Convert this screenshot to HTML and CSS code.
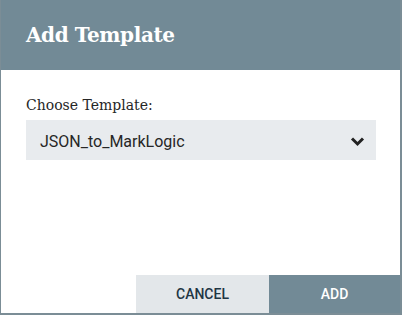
FILE: index.html
```html
<!DOCTYPE html>
<html lang="en">
<head>
    <meta charset="UTF-8">
    <title>Add Template</title>
    <link rel="stylesheet" href="styles.css">
</head>
<body>
    <div class="dialog">
        <header class="dialog-header">
            <h1>Add Template</h1>
        </header>
        <div class="dialog-body">
            <label class="field-label" for="template">Choose Template:</label>
            <div class="select">
                <span class="select-value">JSON_to_MarkLogic</span>
                <svg class="chevron" width="15" height="11" viewBox="0 0 15 11">
                    <path d="M2 2.5 L7.5 8 L13 2.5" fill="none" stroke="#222" stroke-width="3"/>
                </svg>
            </div>
        </div>
        <div class="dialog-footer">
            <button class="btn btn-cancel">CANCEL</button>
            <button class="btn btn-add">ADD</button>
        </div>
    </div>
</body>
</html>
```

FILE: styles.css
```css
body {
    margin: 0;
    padding: 0;
    background: #ffffff;
}
.dialog {
    width: 402px;
    height: 315px;
    box-sizing: border-box;
    border: 1px solid #7b8d96;
    border-top: none;
    border-bottom-width: 2px;
    border-right-width: 2px;
    display: flex;
    flex-direction: column;
    background: #fff;
}
.dialog-header {
    background-color: #728a96;
    height: 70px;
    display: flex;
    align-items: center;
    padding: 0 25px;
}
.dialog-header h1 {
    margin: 0;
    color: #fff;
    font-family: "DejaVu Serif", serif;
    font-size: 20px;
    font-weight: bold;
    letter-spacing: -0.4px;
}
.dialog-body {
    flex-grow: 1;
    padding: 27px 24px 0 25px;
}
.field-label {
    display: block;
    font-family: "DejaVu Serif", serif;
    font-size: 14px;
    color: #262626;
    margin-bottom: 7px;
}
.select {
    height: 40px;
    background-color: #e8ebee;
    display: flex;
    align-items: center;
    justify-content: space-between;
    padding: 2px 11px 0 14px;
    box-sizing: border-box;
}
.select-value {
    font-family: Roboto, sans-serif;
    font-size: 16px;
    color: #262626;
}
.dialog-footer {
    display: flex;
    justify-content: flex-end;
    height: 38px;
}
.btn {
    border: none;
    font-family: Roboto, sans-serif;
    font-size: 14px;
    font-weight: 500;
    cursor: pointer;
}
.btn-cancel {
    width: 133px;
    background-color: #e3e7ea;
    color: #1f3644;
}
.btn-add {
    width: 131px;
    background-color: #728a96;
    color: #fff;
}
```
